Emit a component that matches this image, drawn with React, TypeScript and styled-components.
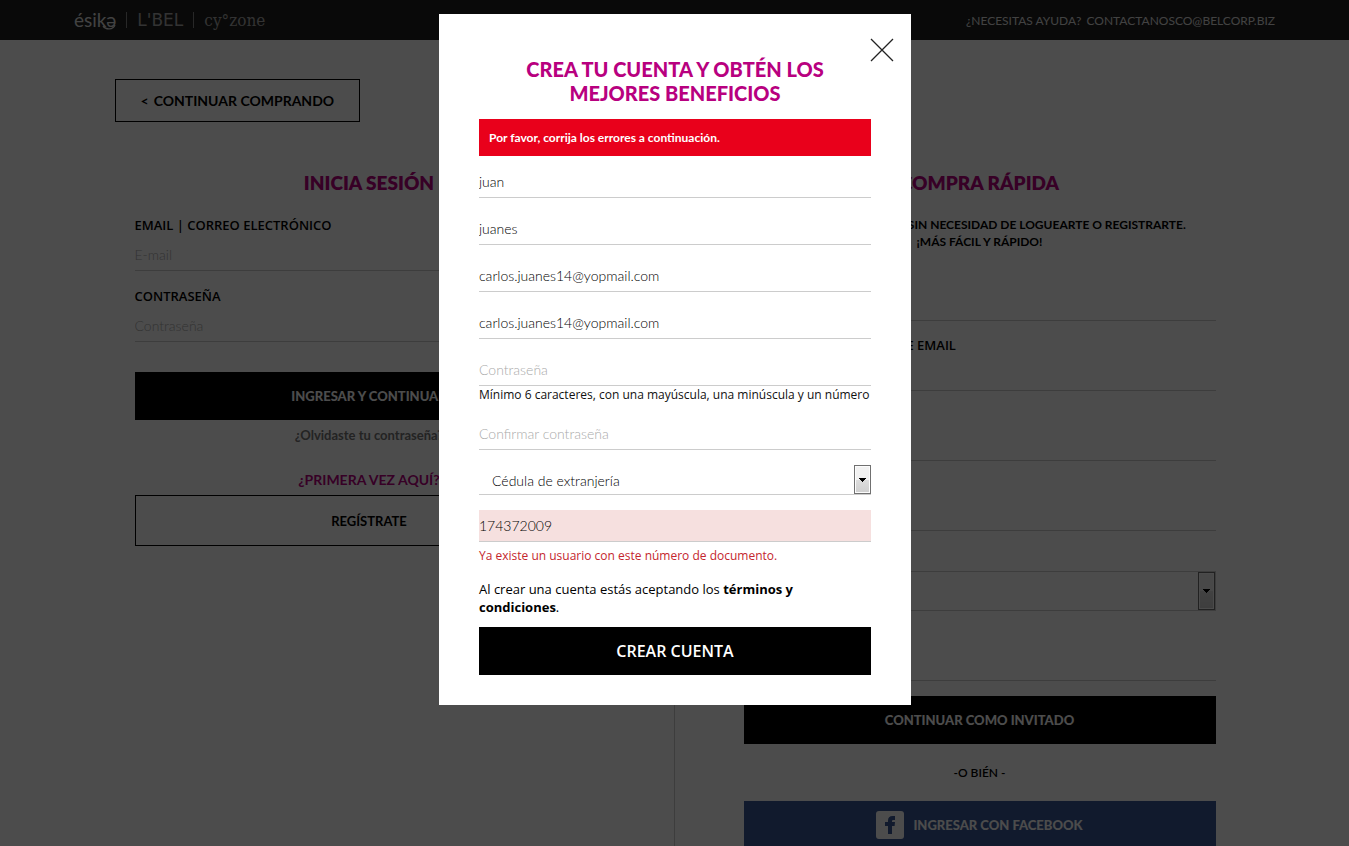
import React from "react";
import styled, { createGlobalStyle, css } from "styled-components";

const lato = `Lato, "Liberation Sans", sans-serif`;
const openSans = `"Open Sans", "Liberation Sans", sans-serif`;
const magenta = "#b8007f";

const GlobalStyle = createGlobalStyle`
  *, *::before, *::after { box-sizing: border-box; }
  html, body { margin: 0; padding: 0; background: #fff; }
  body { overflow: hidden; font-family: ${lato}; font-size: 14px; line-height: 18px; color: #000; }
  h1, h2, p { margin: 0; }
  a { color: inherit; text-decoration: none; }
  button, input, select { font: inherit; color: inherit; border-radius: 0; margin: 0; }
  button { cursor: pointer; }
`;

/* ---------- page ---------- */

const Header = styled.header`
  display: flex;
  align-items: center;
  justify-content: space-between;
  height: 40px;
  padding: 0 74px;
  background: #202020;
`;

const Brands = styled.nav`
  display: flex;
  align-items: center;
`;

const BrandLink = styled.a<{ $family: string; $size: number; $color: string }>`
  position: relative;
  font-family: ${(p) => p.$family};
  font-size: ${(p) => p.$size}px;
  line-height: 16px;
  color: ${(p) => p.$color};
  & + & {
    margin-left: 10px;
    padding-left: 10px;
    border-left: 1px solid #888;
  }
`;

const Swoosh = styled.svg`
  position: absolute;
  right: 0;
  bottom: -2px;
`;

const HelpLinks = styled.div`
  display: flex;
  gap: 5px;
  padding-top: 2px;
  font-size: 12px;
  font-weight: 400;
  color: #ddd;
`;

const Main = styled.main`
  max-width: 1120px;
  margin: 0 auto;
  padding-top: 39px;
`;

const BackLink = styled.a`
  display: inline-flex;
  align-items: center;
  gap: 5px;
  height: 43px;
  padding: 0 25px;
  border: 1px solid #000;
  font-size: 14px;
  font-weight: 700;
`;

const Columns = styled.div`
  display: grid;
  grid-template-columns: 539fr 542fr;
  padding: 49px 19px 0 20px;
`;

const Column = styled.section<{ $divided?: boolean }>`
  padding-right: 70px;
  ${(p) =>
    p.$divided &&
    css`
      padding: 0 0 0 69px;
      border-left: 1px solid #ccc;
    `}
`;

const Title = styled.h2`
  font-size: 19px;
  line-height: 24px;
  font-weight: 800;
  text-align: center;
  color: ${magenta};
  margin-bottom: 21px;
`;

const DialogTitle = styled.h1`
  font-size: 20px;
  line-height: 24px;
  font-weight: 900;
  text-align: center;
  color: ${magenta};
  margin-bottom: 14px;
`;

const Intro = styled.p`
  font-size: 12px;
  line-height: 17px;
  font-weight: 700;
  text-align: center;
  margin-bottom: 16px;
`;

const Field = styled.div<{ $gap?: number }>`
  display: flex;
  flex-direction: column;
  margin-bottom: ${(p) => p.$gap ?? 15}px;
`;

const Label = styled.label`
  font-family: ${openSans};
  font-size: 13px;
  line-height: 18px;
  font-weight: 600;
`;

const inputText = css`
  font-family: ${lato};
  font-size: 14px;
  font-weight: 300;
  outline: none;
  &::placeholder {
    color: #aaa;
    opacity: 1;
  }
`;

const PageInput = styled.input`
  ${inputText}
  width: 100%;
  height: 37px;
  padding: 4px 0 0;
  border: 0;
  border-bottom: 1px solid #ccc;
  background: transparent;
`;

const SolidButton = styled.button<{ $bg?: string }>`
  display: flex;
  align-items: center;
  justify-content: center;
  gap: 9px;
  width: 100%;
  height: 48px;
  padding: 0;
  border: 0;
  background: ${(p) => p.$bg ?? "#000"};
  color: #fff;
  font-size: 13px;
  font-weight: 900;
`;

const OutlineButton = styled.button`
  width: 100%;
  height: 51px;
  border: 1px solid #000;
  background: transparent;
  font-size: 13px;
  font-weight: 700;
`;

const ForgotLink = styled.a`
  display: block;
  margin: 6px 0 27px;
  text-align: center;
  font-size: 13px;
  font-weight: 700;
  color: #777;
`;

const FirstTime = styled.p`
  margin-bottom: 6px;
  text-align: center;
  font-weight: 700;
  color: ${magenta};
`;

const Or = styled.p`
  margin: 20px 0 19px;
  text-align: center;
  font-size: 12px;
  font-weight: 600;
`;

/* ---------- select with a classic drop-down button ---------- */

const SelectBox = styled.div<{ $framed?: boolean }>`
  position: relative;
  height: ${(p) => (p.$framed ? 40 : 30)}px;
  border: solid #ccc;
  border-width: ${(p) => (p.$framed ? "1px" : "0 0 1px")};
  margin-bottom: 15px;
`;

const Select = styled.select`
  ${inputText}
  width: 100%;
  height: 100%;
  padding: 2px 30px 0 13px;
  border: 0;
  background: transparent;
  appearance: none;
`;

const DropMark = styled.span`
  position: absolute;
  top: 0;
  right: 0;
  bottom: 0;
  width: 17px;
  display: flex;
  align-items: center;
  justify-content: center;
  border: 1px solid #707070;
  box-shadow: inset 0 0 0 1px #fcfcfc;
  background: linear-gradient(#f2f2f2 0 50%, #dddddd 50%, #cfcfcf);
  pointer-events: none;
`;

/* ---------- dialog ---------- */

const Overlay = styled.div`
  position: fixed;
  inset: 0;
  padding: 14px 0 14px 1px;
  background: rgba(0, 0, 0, 0.7);
  overflow: hidden;
`;

const Dialog = styled.div`
  position: relative;
  width: 100%;
  max-width: 472px;
  margin: 0 auto;
  padding: 43px 40px 30px;
  background: #fff;
`;

const CloseButton = styled.button`
  position: absolute;
  top: 24px;
  right: 17px;
  display: flex;
  padding: 0;
  border: 0;
  background: none;
`;

const Alert = styled.p`
  padding: 10px;
  margin-bottom: 10px;
  background: #e9001b;
  color: #fff;
  font-size: 12px;
  line-height: 17px;
  font-weight: 700;
`;

const DialogInput = styled.input<{ $invalid?: boolean; $gap?: number }>`
  ${inputText}
  display: block;
  width: 100%;
  height: 32px;
  padding: 0;
  margin-bottom: ${(p) => p.$gap ?? 15}px;
  border: 0;
  border-bottom: 1px solid #ccc;
  background: ${(p) => (p.$invalid ? "#f6e0df" : "transparent")};
`;

const Note = styled.p<{ $error?: boolean }>`
  margin-bottom: 15px;
  font-family: ${openSans};
  font-size: 12px;
  line-height: ${(p) => (p.$error ? 18 : 17)}px;
  color: ${(p) => (p.$error ? "#c4262e" : "#111")};
`;

const Terms = styled.p`
  margin-bottom: 11px;
  font-family: ${openSans};
  font-size: 13px;
  line-height: 18px;
`;

const CreateButton = styled(SolidButton)`
  font-family: ${openSans};
  font-size: 16px;
  font-weight: 600;
`;

const Arrow = () => (
  <DropMark>
    <svg width="7" height="4" viewBox="0 0 7 4" aria-hidden="true" shapeRendering="crispEdges">
      <path d="M0 0h7v1H0zM1 1h5v1H1zM2 2h3v1H2zM3 3h1v1H3z" fill="#000" />
    </svg>
  </DropMark>
);

const PageField = ({ id, label, type = "text", placeholder, gap }: {
  id: string; label: string; type?: string; placeholder?: string; gap?: number;
}) => (
  <Field $gap={gap}>
    <Label htmlFor={id}>{label}</Label>
    <PageInput id={id} type={type} placeholder={placeholder} />
  </Field>
);

export default function App() {
  return (
    <>
      <GlobalStyle />
      <Header>
        <Brands aria-label="Marcas">
          <BrandLink href="#esika" $family={lato} $size={19} $color="#ddd">
            ésikə
            <Swoosh width="14" height="6" viewBox="0 0 14 6" aria-hidden="true">
              <path d="M1 2c3 4 10 4 12-1" fill="none" stroke="#ddd" strokeWidth="1.300" />
            </Swoosh>
          </BrandLink>
          <BrandLink href="#lbel" $family={`"DejaVu Sans", sans-serif`} $size={17} $color="#aaa">
            L'BEL
          </BrandLink>
          <BrandLink href="#cyzone" $family={`"DejaVu Serif Condensed", "DejaVu Serif", serif`} $size={17} $color="#aaa">
            cy°zone
          </BrandLink>
        </Brands>
        <HelpLinks>
          <span>¿NECESITAS AYUDA?</span>
          <a href="mailto:contactanosco@belcorp.biz">CONTACTANOSCO@BELCORP.BIZ</a>
        </HelpLinks>
      </Header>

      <Main>
        <BackLink href="#tienda">
          <span>&lt;</span>
          <span>CONTINUAR COMPRANDO</span>
        </BackLink>
        <Columns>
          <Column>
            <Title>INICIA SESIÓN</Title>
            <PageField id="login-email" label="EMAIL | CORREO ELECTRÓNICO" placeholder="E-mail" gap={16} />
            <PageField id="login-pass" label="CONTRASEÑA" type="password" placeholder="Contraseña" gap={30} />
            <SolidButton type="button">INGRESAR Y CONTINUAR</SolidButton>
            <ForgotLink href="#clave">¿Olvidaste tu contraseña?</ForgotLink>
            <FirstTime>¿PRIMERA VEZ AQUÍ?</FirstTime>
            <OutlineButton type="button">REGÍSTRATE</OutlineButton>
          </Column>
          <Column $divided>
            <Title>COMPRA RÁPIDA</Title>
            <Intro>
              REALIZA UNA COMPRA SIN NECESIDAD DE LOGUEARTE O REGISTRARTE.
              <br />
              ¡MÁS FÁCIL Y RÁPIDO!
            </Intro>
            <PageField id="guest-email" label="EMAIL" />
            <PageField id="guest-email2" label="CONFIRMAR DIRECCIÓN DE EMAIL" />
            <PageField id="guest-name" label="NOMBRE" />
            <PageField id="guest-last" label="APELLIDO" gap={22} />
            <Label htmlFor="guest-doc">DOCUMENTO</Label>
            <SelectBox $framed>
              <Select id="guest-doc"><option></option></Select>
              <Arrow />
            </SelectBox>
            <PageField id="guest-num" label="NÚMERO" />
            <SolidButton type="button">CONTINUAR COMO INVITADO</SolidButton>
            <Or>-O BIÉN -</Or>
            <SolidButton type="button" $bg="#3b5998">
              <svg width="28" height="28" viewBox="0 0 28 28" aria-hidden="true">
                <rect width="28" height="28" rx="3" fill="#fff" />
                <path d="M12 23v-8H9v-4h3V9.500C12 6.500 13.500 5 16.500 5H19v4h-1.500c-1 0-1.500.4-1.500 1.300V11h3l-.4 4H16v8z" fill="#3b5998" />
              </svg>
              INGRESAR CON FACEBOOK
            </SolidButton>
          </Column>
        </Columns>
      </Main>

      <Overlay>
        <Dialog role="dialog" aria-modal="true" aria-labelledby="dialog-title">
          <CloseButton type="button" aria-label="Cerrar">
            <svg width="24" height="24" viewBox="0 0 24 24" aria-hidden="true">
              <path d="M1 1l22 22M23 1L1 23" stroke="#222" strokeWidth="1.300" />
            </svg>
          </CloseButton>
          <DialogTitle id="dialog-title">
            CREA TU CUENTA Y OBTÉN LOS MEJORES BENEFICIOS
          </DialogTitle>
          <Alert role="alert">Por favor, corrija los errores a continuación.</Alert>
          <form onSubmit={(e) => e.preventDefault()}>
            <DialogInput aria-label="Nombre" defaultValue="juan" />
            <DialogInput aria-label="Apellido" defaultValue="juanes" />
            <DialogInput aria-label="E-mail" defaultValue="carlos.juanes14@yopmail.com" />
            <DialogInput aria-label="Confirmar e-mail" defaultValue="carlos.juanes14@yopmail.com" />
            <DialogInput type="password" aria-label="Contraseña" placeholder="Contraseña" $gap={0} />
            <Note>Mínimo 6 caracteres, con una mayúscula, una minúscula y un número</Note>
            <DialogInput type="password" aria-label="Confirmar contraseña" placeholder="Confirmar contraseña" />
            <SelectBox>
              <Select aria-label="Tipo de documento">
                <option>Cédula de extranjería</option>
              </Select>
              <Arrow />
            </SelectBox>
            <DialogInput aria-label="Número de documento" defaultValue="174372009" $invalid $gap={5} />
            <Note $error>Ya existe un usuario con este número de documento.</Note>
            <Terms>
              Al crear una cuenta estás aceptando los <a href="#terminos"><b>términos y condiciones</b></a>.
            </Terms>
            <CreateButton type="submit">CREAR CUENTA</CreateButton>
          </form>
        </Dialog>
      </Overlay>
    </>
  );
}
